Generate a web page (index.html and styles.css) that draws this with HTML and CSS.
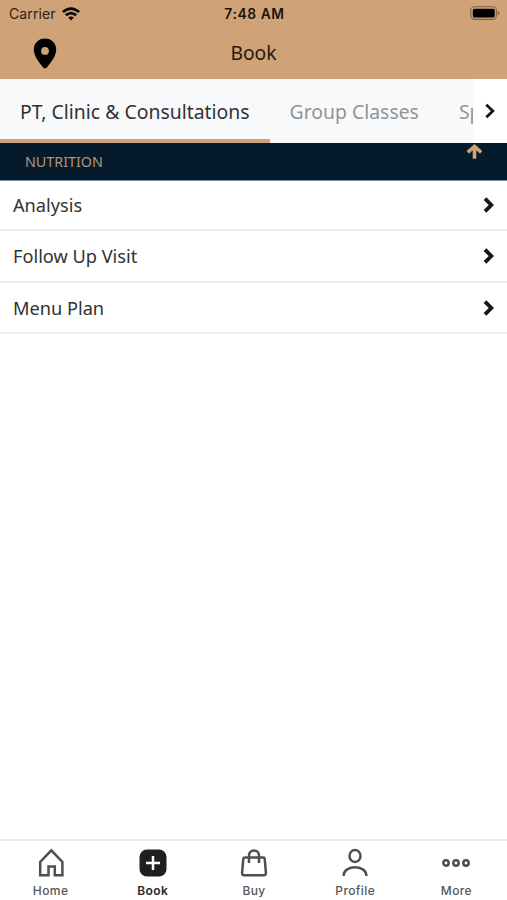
FILE: index.html
```html
<!DOCTYPE html>
<html lang="en">
<head>
<meta charset="utf-8">
<meta name="viewport" content="width=device-width, initial-scale=1">
<title>Book</title>
<link rel="stylesheet" href="styles.css">
</head>
<body>
<div class="app">
  <header class="header">
    <div class="status">
      <div class="carrier"><span>Carrier</span>
        <svg class="wifi" width="18" height="14" viewBox="0 0 18 14"><g fill="none" stroke="#080604" stroke-width="2.7"><path d="M.9 5.1Q9-2 17.1 5.1"/><path d="M3.8 8.3Q9 3.8 14.2 8.3"/></g><path d="M6.2 10.6Q9 8.3 11.8 10.6L9 13.6Z" fill="#080604"/></svg>
      </div>
      <time class="time">7:48 AM</time>
      <svg class="battery" width="30" height="15" viewBox="0 0 30 15"><rect x=".8" y=".8" width="25.6" height="12.6" rx="3.6" fill="none" stroke="#806342" stroke-width="1.1"/><rect x="2.8" y="2.8" width="21.9" height="8.8" rx="1.6"/><path d="M27.7 5Q29.4 5.5 29.4 7.2T27.7 9.4Z" fill="#806342"/></svg>
    </div>
    <div class="titlebar">
      <svg class="pin" width="24" height="31" viewBox="0 0 24 31"><path fill-rule="evenodd" d="M12 .5C5.7.5.8 5.2.8 11.5c0 6.5 5.2 13 9.4 18a2.3 2.3 0 0 0 3.6 0c4.2-5 9.4-11.5 9.4-18C23.2 5.2 18.3.5 12 .5Zm0 8.500a3.900 3.900 0 1 1 0 7.800 3.900 3.900 0 0 1 0-7.800Z"/></svg>
      <h1 class="title">Book</h1>
    </div>
  </header>
  <nav class="tabs">
    <div class="tab-list">
      <span class="tab active">PT, Clinic &amp; Consultations</span>
      <span class="tab">Group Classes</span>
      <span class="tab">Specials</span>
    </div>
    <span class="next"><svg width="12" height="18" viewBox="0 0 12 18"><path d="M2.300 2.700 8.900 9 2.300 15.300" fill="none" stroke="#111" stroke-width="2.700"/></svg></span>
  </nav>
  <main class="content">
    <div class="section">
      <span>NUTRITION</span>
      <svg class="up" width="16" height="16" viewBox="0 0 16 16"><path d="M8.500 14.800V3M1.800 8.400 8.500 2.200l6.700 6.200" fill="none" stroke="#cfa278" stroke-width="3.600" stroke-linejoin="round"/></svg>
    </div>
    <div class="row"><span>Analysis</span><svg class="chev" width="12" height="18" viewBox="0 0 12 18"><path d="M2 2.700 8.300 9 2 15.300" fill="none" stroke="#171717" stroke-width="3.800"/></svg></div>
    <div class="row"><span>Follow Up Visit</span><svg class="chev" width="12" height="18" viewBox="0 0 12 18"><path d="M2 2.700 8.300 9 2 15.300" fill="none" stroke="#171717" stroke-width="3.800"/></svg></div>
    <div class="row"><span>Menu Plan</span><svg class="chev" width="12" height="18" viewBox="0 0 12 18"><path d="M2 2.700 8.300 9 2 15.300" fill="none" stroke="#171717" stroke-width="3.800"/></svg></div>
  </main>
  <nav class="bottom">
    <div class="item"><svg width="30" height="30" viewBox="0 0 30 30"><path d="M4.200 27.300V13.900L15.300 2.300l11.100 11.600v13.400h-7.600v-8.800h-6.300v8.800Z"/></svg><span>Home</span></div>
    <div class="item current"><svg width="30" height="30" viewBox="0 0 30 30"><rect x="1.500" y="1.500" width="27" height="27" rx="7.500" fill="#1d1f21" stroke="none"/><path d="M15 8v14M8 15h14" stroke="#fff"/></svg><span>Book</span></div>
    <div class="item"><svg width="30" height="30" viewBox="0 0 30 30"><path d="M5.700 9.500h18.600c.8 0 1.300.4 1.400 1.100l1.200 14.300c.1 1.400-.7 2.300-2 2.300H5.100c-1.300 0-2.100-.9-2-2.300l1.200-14.300c.1-.7.600-1.100 1.400-1.100ZM10 15V7.800c0-7.200 10-7.200 10 0V15"/></svg><span>Buy</span></div>
    <div class="item"><svg width="30" height="30" viewBox="0 0 30 30"><ellipse cx="15" cy="8" rx="5.500" ry="6"/><path d="M3.700 28v-1.300C4.900 16.900 25.100 16.900 26.300 26.700V28"/></svg><span>Profile</span></div>
    <div class="item"><svg width="30" height="30" viewBox="0 0 30 30"><circle cx="5" cy="15" r="2.700"/><circle cx="15" cy="15" r="2.700"/><circle cx="25" cy="15" r="2.700"/></svg><span>More</span></div>
  </nav>
</div>
</body>
</html>
```
FILE: styles.css
```css
* { box-sizing: border-box; }
body { margin: 0; background: #fff; color: #303234; font-family: "Noto Sans", sans-serif; }
svg { display: block; flex: none; }
.app { height: 900px; display: flex; flex-direction: column; overflow: hidden; }
.header { height: 79px; background: #cfa278; }
.status { height: 27px; display: grid; grid-template-columns: 1fr auto 1fr; align-items: center; padding: 0 7px 0 9px; font-family: Inter, sans-serif; }
.carrier { display: flex; gap: 6px; align-items: center; font-size: 14px; letter-spacing: .1px; color: #2c2117; }
.time { font-size: 13.800px; font-weight: 600; letter-spacing: .6px; color: #1b140d; }
.battery { justify-self: end; }
.titlebar { height: 52px; display: grid; grid-template-columns: 1fr auto 1fr; align-items: center; }
.pin { margin-left: 33px; }
.title { margin: 0; font-size: 19.300px; font-weight: 400; line-height: 50px; color: #241a10; }
.tabs { height: 64px; display: flex; background: #f8f9fb; }
.tab-list { flex: 1; min-width: 0; display: flex; overflow: hidden; }
.tab { flex: none; padding: 0 20px; border-bottom: 4px solid transparent; font-size: 19.400px; line-height: 66px; color: #929497; white-space: nowrap; }
.tab.active { border-color: #cfa278; color: #303234; }
.next { flex: none; width: 34px; display: flex; align-items: center; justify-content: center; background: #fff; }
.section { height: 38px; display: flex; justify-content: space-between; padding: 0 25px; background: #051a2b; border-bottom: 1px solid #8290a0; color: #b29774; font-size: 14.300px; line-height: 37px; }
.up { margin-top: 1px; }
.row { height: 51px; display: flex; align-items: center; justify-content: space-between; padding: 0 12px 0 13px; border-bottom: 2px solid #eee; font-size: 18.200px; }
.row:nth-child(2) { height: 50px; }
.row:nth-child(3) { height: 52px; }
.content { flex: 1; }
.bottom { height: 61px; display: flex; border-top: 2px solid #ebebeb; }
.item { flex: 1; display: flex; flex-direction: column; align-items: center; padding-top: 7px; font: 500 12px/20px Inter, sans-serif; letter-spacing: .4px; color: #55585b; }
.item svg { fill: none; stroke: #4d5053; stroke-width: 2.500; }
.item span { margin-top: 3px; }
.current { padding-left: 1px; color: #242628; font-weight: 600; }
```
